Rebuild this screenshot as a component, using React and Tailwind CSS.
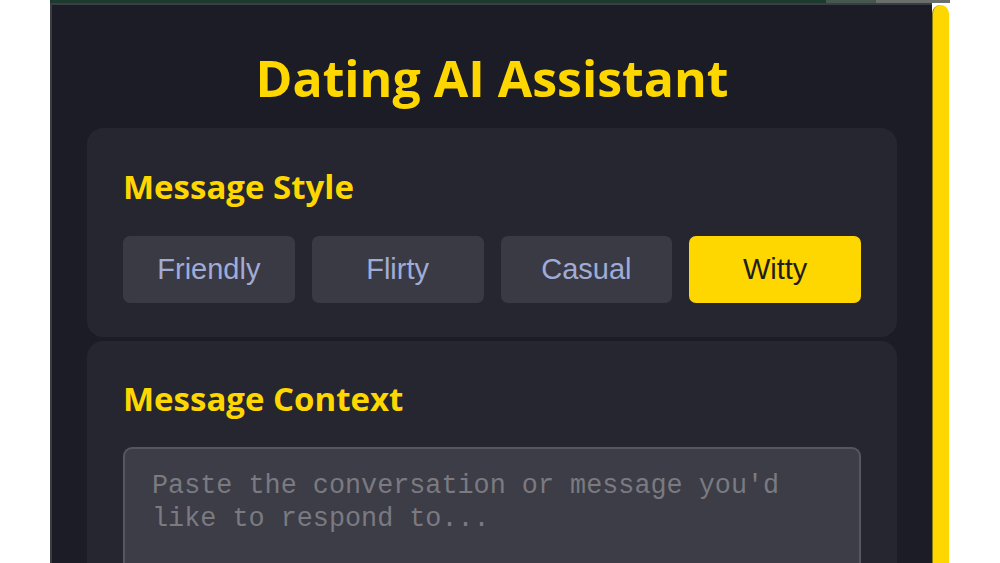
export default function App() {
  const styles = ["Friendly", "Flirty", "Casual", "Witty"];
  return (
    <div className="w-[1000px] h-[563px] bg-white flex overflow-hidden">
      <div className="ml-[50px] w-[900px] h-full flex flex-col">
        <div className="h-[3px] flex shrink-0">
          <div className="w-[776px] bg-[#1d3a2f]" />
          <div className="w-[50px] bg-[#46574f]" />
          <div className="flex-1 bg-[#6b6f6c]" />
        </div>
        <div className="flex flex-1 min-h-0">
          <div className="flex-1 bg-[#1c1c27] border-l-[2px] border-t-[2px] border-[#3b3d44] flex flex-col px-[35px]">
            <h1 className="text-center text-[#ffd700] font-bold text-[50px] leading-[60px] mt-[43px] mb-[20px] [font-family:'Open_Sans',sans-serif]">
              Dating AI Assistant
            </h1>
            <div className="bg-[#262630] rounded-[16px] px-[36px] pt-[39px] pb-[34px] h-[209px] flex flex-col shrink-0">
              <h2 className="text-[#ffd700] font-bold text-[33px] leading-[40px] mb-[29px] [font-family:'Open_Sans',sans-serif]">
                Message Style
              </h2>
              <div className="grid grid-cols-4 gap-[17px]">
                {styles.map((s) => (
                  <button
                    key={s}
                    className={
                      s === "Witty"
                        ? "h-[67px] rounded-[7px] bg-[#ffd700] text-[#1e1e1e] text-[29px] [font-family:'Liberation_Sans',Arial,sans-serif]"
                        : "h-[67px] rounded-[7px] bg-[#3a3a45] text-[#a0acd6] text-[29px] [font-family:'Liberation_Sans',Arial,sans-serif]"
                    }
                  >
                    {s}
                  </button>
                ))}
              </div>
            </div>
            <div className="mt-[4px] bg-[#262630] rounded-t-[16px] px-[36px] pt-[38px] flex-1 flex flex-col">
              <h2 className="text-[#ffd700] font-bold text-[33px] leading-[40px] mb-[28px] [font-family:'Open_Sans',sans-serif]">
                Message Context
              </h2>
              <textarea
                className="w-full h-[200px] shrink-0 bg-[#3d3d47] border-[2px] border-[#55565e] rounded-[9px] pl-[27px] pr-[27px] pt-[21px] text-[26.8px] leading-[33px] text-[#cccccc] placeholder:text-[#7a7a80] resize-none outline-none [font-family:'Liberation_Mono',monospace]"
                placeholder="Paste the conversation or message you'd like to respond to..."
              />
            </div>
          </div>
          <div className="w-[18px] bg-white flex">
            <div className="w-[17px] mt-[2px] bg-[#ffd700] rounded-t-full border-l border-[#8a7a10]" />
          </div>
        </div>
      </div>
    </div>
  );
}
